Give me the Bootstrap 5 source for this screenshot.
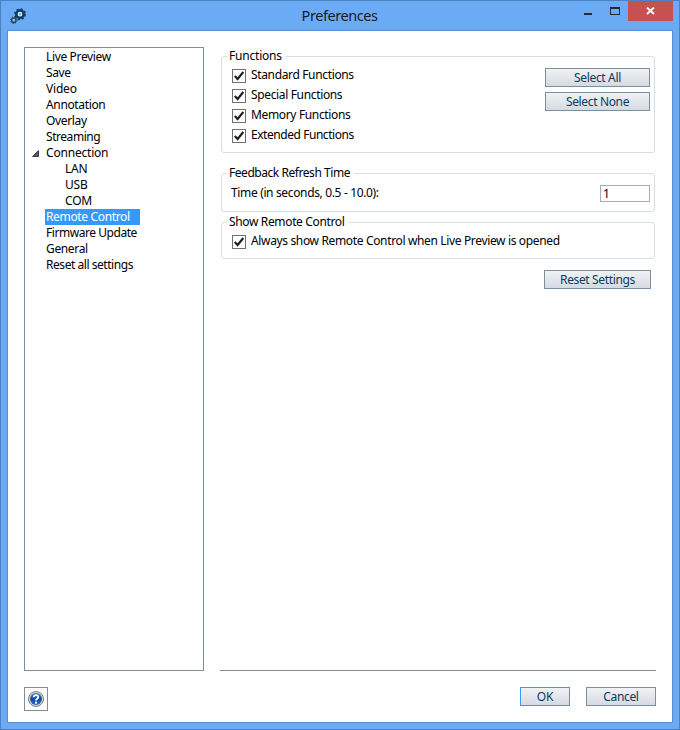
<!DOCTYPE html>
<html lang="en">
<head>
<meta charset="utf-8">
<meta name="viewport" content="width=device-width, initial-scale=1">
<title>Preferences</title>
<link href="https://cdn.jsdelivr.net/npm/bootstrap@5.3.0/dist/css/bootstrap.min.css" rel="stylesheet">
<style>
  body { margin: 0; font-family: "Noto Sans", "Open Sans", sans-serif; font-size: 12px; line-height: 16px; color: #000; letter-spacing: -.35px; overflow: hidden; }
  .win { width: 680px; height: 730px; background: #6babf6; border: 1px solid #4a83bf; padding: 0 6px 6px; }
  .titlebar { height: 29px; flex: none; }
  .app-icon { margin: 6px 0 0 2px; }
  .win-title { font-size: 14.5px; line-height: 29px; letter-spacing: -.45px; color: #141c28; padding-left: 70px; }
  .close-btn { width: 45px; height: 20px; background: #c75050; border: 0; }
  .client { background: #fefefe; border: 1px solid #5590d3; padding: 16px 16px 11px; }
  .tree { width: 180px; height: 624px; border: 1px solid #7b8f9f; padding: 1px 0 0 20px; }
  .tree li { height: 16px; display: flex; }
  .tree li > span { padding: 0 9px 0 1px; white-space: nowrap; position: relative; }
  .tree .picked { background: #3399ff; color: #fff; width: 95px; }
  .tree .sub { padding-left: 19px; }
  .tree .sub, .loose { letter-spacing: -.2px; }
  .tight { letter-spacing: -.45px; }
  .arrow { position: absolute; left: -13px; top: 5px; }
  .pane { width: 436px; height: 624px; border-bottom: 1px solid #7b8f9f; padding: 9px 1px 0; }
  .group { border: 1px solid #d5dfe5; border-radius: 3px; position: relative; }
  .group-label { position: absolute; left: 5px; top: -9px; background: #fefefe; padding: 0 4px 0 2px; white-space: nowrap; }
  .checks { padding: 10px 0 0 10px; }
  .check-row { height: 20px; gap: 5px; }
  .tick { width: 14px; height: 14px; border: 1px solid #707070; background: #fff; flex: none; margin-top: 2px; display: block; }
  .push { height: 19px; border: 1px solid #7b8f9f; border-radius: 0; background: linear-gradient(#f0f2f4, #d5dae3); color: #0c3c5c; font-size: 12px; line-height: 17px; padding: 0; letter-spacing: -.35px; }
  .push.focused { border-color: #3399ff; letter-spacing: -.1px; }
  .num { width: 50px; height: 17px; border: 1px solid #abadb3; border-radius: 0; font-size: 12px; line-height: 15px; padding: 0 2px; color: #000; min-height: 0; }
  .help { width: 24px; height: 24px; border: 1px solid #7b8f9f; background: #fefefe; padding: 3px; }
  .w105 { width: 105px; } .w107 { width: 107px; } .w50 { width: 50px; } .w70 { width: 70px; }
  .g1 { height: 97px; } .g2 { height: 39px; margin-top: 20px; padding: 11px 4px 0 9px; } .g3 { height: 37px; margin-top: 10px; }
  .pick-btns { gap: 5px; padding: 11px 4px 0 0; }
  .reset-row { padding: 11px 4px 0 0; }
  svg { display: block; }
</style>
</head>
<body>
<div class="win d-flex flex-column">
  <header class="titlebar d-flex align-items-start">
    <svg class="app-icon" width="17" height="18" viewBox="0 0 17 18">
      <circle cx="11" cy="7.2" r="3.5" fill="none" stroke="#103f5e" stroke-width="3"/>
      <circle cx="11" cy="7.2" r="5.2" fill="none" stroke="#103f5e" stroke-width="1.6" stroke-dasharray="2.1 1.98"/>
      <circle cx="11" cy="7.2" r="1.8" fill="#6babf6" stroke="#e8f1f6" stroke-width="1.1"/>
      <circle cx="4.8" cy="13.2" r="2.2" fill="#9cb9cb" stroke="#254965" stroke-width="1.5"/>
      <circle cx="4.8" cy="13.2" r="3.3" fill="none" stroke="#254965" stroke-width="1" stroke-dasharray="1.3 1.29"/>
    </svg>
    <div class="win-title flex-grow-1 text-center">Preferences</div>
    <svg width="45" height="20" viewBox="0 0 45 20" shape-rendering="crispEdges">
      <rect x="1" y="12" width="8" height="2" fill="#222b38"/>
      <path d="M27 6h10v8H27zM28 8v5h8V8z" fill="#222b38" fill-rule="evenodd"/>
    </svg>
    <button class="close-btn p-0 d-flex align-items-center justify-content-center" aria-label="Close">
      <svg width="9" height="8" viewBox="0 0 9 8"><path d="M1 .5 8 7M8 .5 1 7" stroke="#fff" stroke-width="1.8" fill="none"/></svg>
    </button>
  </header>

  <main class="client flex-grow-1 d-flex flex-column">
    <div class="d-flex justify-content-between">
      <ul class="tree list-unstyled mb-0">
        <li><span>Live Preview</span></li>
        <li><span>Save</span></li>
        <li><span class="loose">Video</span></li>
        <li><span>Annotation</span></li>
        <li><span>Overlay</span></li>
        <li><span class="tight">Streaming</span></li>
        <li><span class="loose"><svg class="arrow" width="7" height="7" viewBox="0 0 7 7"><path d="M6.5.5v6h-6z" fill="#595959" stroke="#262626" stroke-width=".8"/></svg>Connection</span></li>
        <li class="sub"><span>LAN</span></li>
        <li class="sub"><span>USB</span></li>
        <li class="sub"><span>COM</span></li>
        <li><span class="picked">Remote Control</span></li>
        <li><span class="tight">Firmware Update</span></li>
        <li><span>General</span></li>
        <li><span class="tight">Reset all settings</span></li>
      </ul>

      <div class="pane">
        <section class="group g1 d-flex justify-content-between">
          <div class="group-label loose">Functions</div>
          <div class="checks">
            <div class="check-row d-flex"><span class="tick"><svg width="12" height="12" viewBox="0 0 12 12"><path d="M1.8 6 4.6 9 10.3 2" fill="none" stroke="#212121" stroke-width="2.2"/></svg></span>Standard Functions</div>
            <div class="check-row d-flex"><span class="tick"><svg width="12" height="12" viewBox="0 0 12 12"><path d="M1.8 6 4.6 9 10.3 2" fill="none" stroke="#212121" stroke-width="2.2"/></svg></span>Special Functions</div>
            <div class="check-row d-flex"><span class="tick"><svg width="12" height="12" viewBox="0 0 12 12"><path d="M1.8 6 4.6 9 10.3 2" fill="none" stroke="#212121" stroke-width="2.2"/></svg></span>Memory Functions</div>
            <div class="check-row d-flex"><span class="tick"><svg width="12" height="12" viewBox="0 0 12 12"><path d="M1.8 6 4.6 9 10.3 2" fill="none" stroke="#212121" stroke-width="2.2"/></svg></span><span class="tight">Extended Functions</span></div>
          </div>
          <div class="pick-btns d-flex flex-column">
            <button class="btn push w105">Select All</button>
            <button class="btn push w105">Select None</button>
          </div>
        </section>

        <section class="group g2 d-flex justify-content-between">
          <div class="group-label tight">Feedback Refresh Time</div>
          <label for="secs">Time (in seconds, 0.5 - 10.0):</label>
          <input id="secs" class="form-control num" value="1">
        </section>

        <section class="group g3">
          <div class="group-label">Show Remote Control</div>
          <div class="checks">
            <div class="check-row d-flex"><span class="tick"><svg width="12" height="12" viewBox="0 0 12 12"><path d="M1.8 6 4.6 9 10.3 2" fill="none" stroke="#212121" stroke-width="2.2"/></svg></span>Always show Remote Control when Live Preview is opened</div>
          </div>
        </section>

        <div class="reset-row d-flex justify-content-end">
          <button class="btn push w107 tight">Reset Settings</button>
        </div>
      </div>
    </div>

    <footer class="d-flex align-items-start pt-3">
      <button class="help me-auto" aria-label="Help">
        <svg width="16" height="16" viewBox="0 0 16 16">
          <defs><linearGradient id="hb" x1="0" y1="0" x2="0" y2="1"><stop offset="0" stop-color="#3f74cf"/><stop offset=".5" stop-color="#1043a4"/><stop offset="1" stop-color="#2f6ddb"/></linearGradient></defs>
          <circle cx="8" cy="8" r="7.5" fill="#d5d5cc" stroke="#85857d"/>
          <circle cx="8" cy="8" r="5.9" fill="url(#hb)"/>
          <path d="M5.7 6.2C5.9 3.4 10.4 3.5 10.2 6.1 10.1 7.7 8 7.8 8 9.6" fill="none" stroke="#fff" stroke-width="1.9"/>
          <rect x="7" y="10.6" width="2" height="2" fill="#fff"/>
        </svg>
      </button>
      <button class="btn push focused w50 me-3">OK</button>
      <button class="btn push w70">Cancel</button>
    </footer>
  </main>
</div>
<script src="https://cdn.jsdelivr.net/npm/bootstrap@5.3.0/dist/js/bootstrap.bundle.min.js"></script>
</body>
</html>
